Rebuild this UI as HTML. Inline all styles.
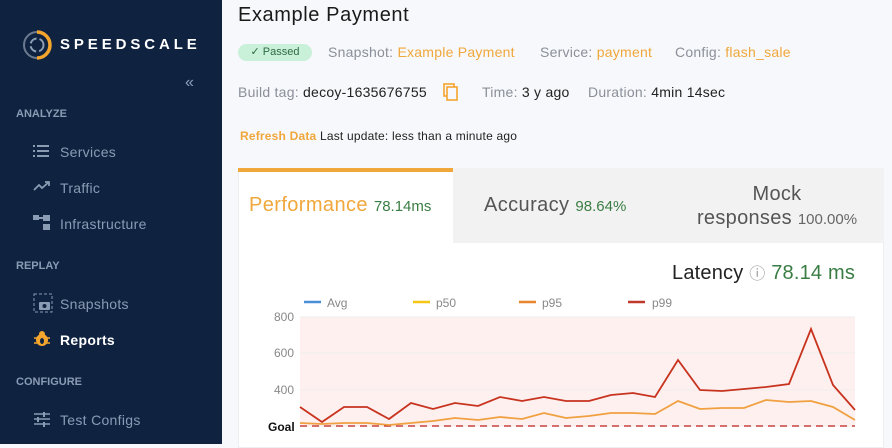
<!DOCTYPE html><html><head><meta charset="utf-8"><style>
*{margin:0;padding:0;box-sizing:border-box}
body{width:892px;height:444px;overflow:hidden;font-family:"Liberation Sans",sans-serif;background:#f7f8fb;position:relative}
.sb{position:absolute;left:0;top:0;width:222px;height:444px;background:#0f2340}
.logo{position:absolute;left:22px;top:30px}
.brand{position:absolute;left:60px;top:36px;color:#fff;font-weight:bold;font-size:15px;letter-spacing:3.9px}
.col{position:absolute;left:185px;top:74px;color:#8da0ba;font-size:16px}
.sec{position:absolute;left:16px;color:#8a9bb4;font-size:11px;font-weight:bold}
.it{position:absolute;left:60px;color:#8a9bb4;font-size:14px;letter-spacing:.3px}
.ic{position:absolute;left:33px}
.t{position:absolute;font-size:14px;color:#8a8f99;white-space:nowrap;letter-spacing:.25px}
.o{color:#f0a73b}.k{color:#222}
</style></head><body>
<div class="sb">
<svg class="logo" width="30" height="30" viewBox="0 0 30 30"><path d="M15 2 A13 13 0 0 1 15 28" stroke="#f3a52d" stroke-width="3.5" fill="none"/><path d="M15 28 A13 13 0 0 1 15 2" stroke="#6b7a8f" stroke-width="2" fill="none"/><circle cx="15" cy="15" r="6.5" stroke="#8ea0b5" stroke-width="2" fill="none" stroke-dasharray="8 3"/></svg>
<div class="brand">SPEEDSCALE</div>
<div class="col">«</div>
<div class="sec" style="top:108px">ANALYZE</div>
<svg class="ic" style="top:144px" width="16" height="14"><g fill="#8a9bb4"><rect x="0" y="1" width="2" height="2"/><rect x="4" y="1" width="12" height="2"/><rect x="0" y="6" width="2" height="2"/><rect x="4" y="6" width="12" height="2"/><rect x="0" y="11" width="2" height="2"/><rect x="4" y="11" width="12" height="2"/></g></svg>
<div class="it" style="top:144px">Services</div>
<svg class="ic" style="top:180px" width="18" height="12"><path d="M1 10 L6 5 L9 8 L16 2 M12 2 H16 V6" stroke="#8a9bb4" stroke-width="1.8" fill="none"/></svg>
<div class="it" style="top:180px">Traffic</div>
<svg class="ic" style="top:215px" width="18" height="16"><g fill="#8a9bb4"><rect x="0" y="0" width="6" height="5"/><rect x="10" y="0" width="7" height="6"/><rect x="10" y="9" width="7" height="6"/><rect x="6" y="2" width="4" height="2"/></g></svg>
<div class="it" style="top:216px">Infrastructure</div>
<div class="sec" style="top:260px">REPLAY</div>
<svg class="ic" style="top:293px" width="20" height="20"><rect x="1" y="1" width="18" height="18" stroke="#8a9bb4" stroke-dasharray="3 2" fill="none"/><rect x="6" y="9" width="11" height="8" rx="1" fill="#8a9bb4"/><circle cx="11.5" cy="13" r="2" fill="#0f2340"/></svg>
<div class="it" style="top:296px">Snapshots</div>
<svg class="ic" style="top:330px" width="18" height="18"><circle cx="9" cy="10" r="6" fill="#f3a52d"/><circle cx="9" cy="4" r="3" fill="#f3a52d"/><ellipse cx="9" cy="11" rx="2" ry="3" fill="#0f2340"/><path d="M1 8h3M14 8h3M1 13h3M14 13h3" stroke="#f3a52d" stroke-width="1.5"/></svg>
<div class="it" style="top:332px;color:#fff;font-weight:bold">Reports</div>
<div class="sec" style="top:376px">CONFIGURE</div>
<svg class="ic" style="top:411px" width="18" height="16"><path d="M1 3h16M1 8h16M1 13h16" stroke="#8a9bb4" stroke-width="1.5"/><path d="M11 1v5M5 6v5M11 11v5" stroke="#8a9bb4" stroke-width="2"/></svg>
<div class="it" style="top:412px">Test Configs</div>
</div>

<div class="t k" style="left:238px;top:4px;font-size:20px;letter-spacing:.6px;color:#1a1a1a">Example Payment</div>
<div class="t" style="left:238px;top:44px;width:74px;height:17px;border-radius:9px;background:#c9f0d8;color:#2f6b44;font-size:11px;text-align:center;line-height:17px;letter-spacing:0">✓ Passed</div>
<div class="t" style="left:328px;top:44px">Snapshot: <span class="o">Example Payment</span></div>
<div class="t" style="left:540px;top:44px">Service: <span class="o">payment</span></div>
<div class="t" style="left:675px;top:44px">Config: <span class="o">flash_sale</span></div>
<div class="t" style="left:238px;top:84px">Build tag: <span class="k">decoy-1635676755</span></div>
<svg style="position:absolute;left:443px;top:83px" width="16" height="18"><rect x="1" y="1" width="10" height="12" stroke="#f3a52d" stroke-width="1.6" fill="none"/><rect x="4" y="4" width="10" height="13" stroke="#f3a52d" stroke-width="1.6" fill="#f7f8fb"/></svg>
<div class="t" style="left:482px;top:84px">Time: <span class="k">3 y ago</span></div>
<div class="t" style="left:588px;top:84px">Duration: <span class="k">4min 14sec</span></div>
<div class="t" style="left:240px;top:129px;font-size:12px;letter-spacing:.2px"><span class="o" style="font-weight:bold">Refresh Data</span> <span class="k">Last update: less than a minute ago</span></div>

<div style="position:absolute;left:238px;top:168px;width:646px;height:280px;background:#fff;border:1px solid #eceef2"></div>
<div style="position:absolute;left:238px;top:168px;width:215px;height:4px;background:#f0a73b"></div>
<div style="position:absolute;left:453px;top:168px;width:431px;height:75px;background:#f2f2f2"></div>
<div class="t" style="left:249px;top:194px;font-size:20px;letter-spacing:.4px;color:#f0a73b">Performance <span style="font-size:15px;letter-spacing:0;color:#3a7d44">78.14ms</span></div>
<div class="t" style="left:484px;top:194px;font-size:20px;letter-spacing:.4px;color:#555">Accuracy <span style="font-size:15px;letter-spacing:0;color:#3a7d44">98.64%</span></div>
<div class="t" style="left:692px;top:182px;font-size:20px;letter-spacing:.3px;color:#555;text-align:center;line-height:24px;width:170px">Mock<br>responses <span style="font-size:15px;letter-spacing:0;color:#666">100.00%</span></div>
<div class="t" style="left:672px;top:260px;font-size:20px;letter-spacing:.2px;color:#222">Latency <span style="color:#999;font-size:16px">ⓘ</span> <span style="color:#3a7d44">78.14 ms</span></div>

<svg style="position:absolute;left:0;top:0" width="892" height="444">
<rect x="300" y="317" width="555" height="110" fill="#fdf0ee"/>
<g stroke="#eee" stroke-width="1"><line x1="300" y1="317" x2="855" y2="317"/><line x1="300" y1="353" x2="855" y2="353"/><line x1="300" y1="390" x2="855" y2="390"/></g>
<g font-size="12" fill="#888" font-family="Liberation Sans"><text x="274" y="321">800</text><text x="274" y="357">600</text><text x="274" y="394">400</text><text x="268" y="431" fill="#111" font-weight="bold">Goal</text>
<text x="327" y="307">Avg</text><text x="436" y="307">p50</text><text x="542" y="307">p95</text><text x="652" y="307">p99</text></g>
<g stroke-width="2.5"><line x1="304" y1="302" x2="321" y2="302" stroke="#4a90d9"/><line x1="413" y1="302" x2="430" y2="302" stroke="#f5c518"/><line x1="519" y1="302" x2="536" y2="302" stroke="#e8862e"/><line x1="628" y1="302" x2="645" y2="302" stroke="#c0392b"/></g>
<line x1="300" y1="426" x2="855" y2="426" stroke="#b22" stroke-width="1.3" stroke-dasharray="7 5"/>
<polyline fill="none" stroke="#f0a040" stroke-width="1.8" points="300,423 322,424 344,423 367,423 389,425 411,423 433,421 455,418 478,420 500,417 522,419 544,413 566,418 589,416 611,413 633,413 655,414 678,401 700,409 722,408 744,408 766,400 789,402 811,401 833,407 855,420"/>
<polyline fill="none" stroke="#c8331f" stroke-width="1.8" points="300,407 322,422 344,407 367,407 389,419 411,403 433,409 455,403 478,406 500,397 522,401 544,397 566,401 589,401 611,395 633,393 655,397 678,360 700,390 722,391 744,389 766,387 789,384 811,329 833,385 855,410"/>
</svg>
</body></html>
